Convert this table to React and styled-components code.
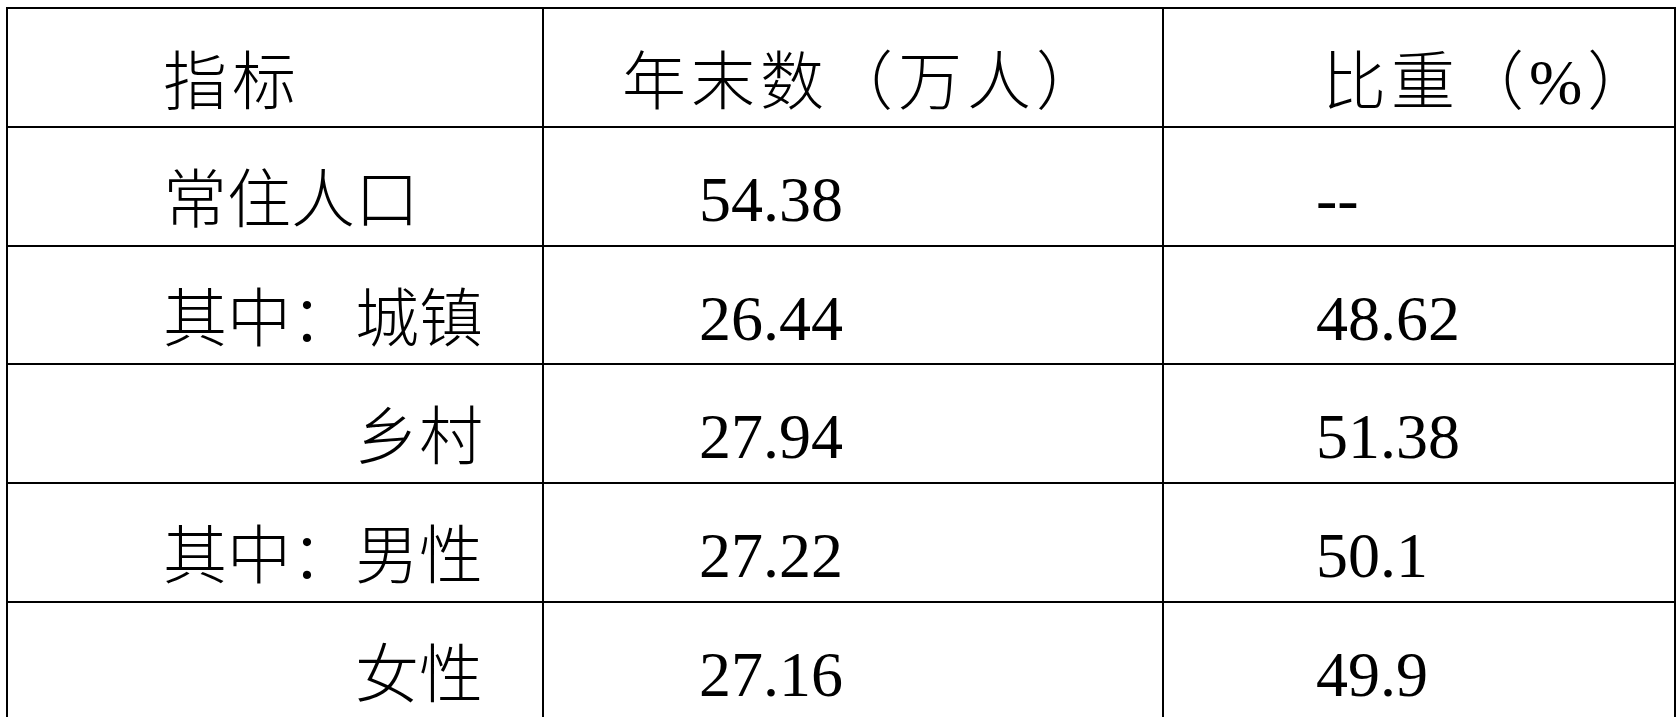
import React from 'react';
import styled, { createGlobalStyle } from 'styled-components';

const GlobalStyle = createGlobalStyle`
  html, body {
    margin: 0;
    padding: 0;
    background: #fff;
    overflow: hidden;
  }
`;

const CJK = '"Noto Sans CJK SC", "Noto Sans CJK TC", sans-serif';
const LATIN = '"Liberation Serif", "Noto Sans CJK SC", serif';

const rows = [
  { label: '常住人口', count: '54.38', share: '--' },
  { label: '其中：城镇', count: '26.44', share: '48.62' },
  { label: '乡村', indent: 3, count: '27.94', share: '51.38' },
  { label: '其中：男性', count: '27.22', share: '50.1' },
  { label: '女性', indent: 3, count: '27.16', share: '49.9' },
];

const App = () => (
  <>
    <GlobalStyle />
    <Page>
      <Grid>
        <HeadCell $left={155}>指标</HeadCell>
        <HeadCell $left={78}>年末数（万人）</HeadCell>
        <HeadCell $left={158}>
          比重（<Percent>%</Percent>）
        </HeadCell>

        {rows.map(row => (
          <React.Fragment key={row.count}>
            <LabelCell $indent={row.indent || 0}>{row.label}</LabelCell>
            <NumberCell $left={155}>{row.count}</NumberCell>
            <NumberCell $left={152}>{row.share}</NumberCell>
          </React.Fragment>
        ))}
      </Grid>
    </Page>
  </>
);

export default App;

const Page = styled.div`
  padding: 7px 0 0 6px;
`;

const Grid = styled.div`
  display: grid;
  grid-template-columns: 536px 620px 512px;
  grid-auto-rows: 118.8px;
  width: 1670px;
  border-top: 2px solid #000;
  border-left: 2px solid #000;
  box-sizing: border-box;
  color: #000;
`;

const Cell = styled.div`
  box-sizing: border-box;
  border-right: 2px solid #000;
  border-bottom: 2px solid #000;
  font-size: 64px;
  line-height: 64px;
  white-space: nowrap;
  overflow: hidden;
  text-spacing-trim: space-all;
`;

const HeadCell = styled(Cell)`
  font-family: ${CJK};
  font-weight: 300;
  letter-spacing: 5px;
  padding: 35px 0 0 ${p => p.$left}px;
`;

const LabelCell = styled(Cell)`
  font-family: ${CJK};
  font-weight: 300;
  padding: 34px 0 0 ${p => 155 + p.$indent * 64}px;
`;

const NumberCell = styled(Cell)`
  font-family: ${LATIN};
  padding: 40px 0 0 ${p => p.$left}px;
`;

const Percent = styled.span`
  font-family: "Liberation Serif", serif;
`;
